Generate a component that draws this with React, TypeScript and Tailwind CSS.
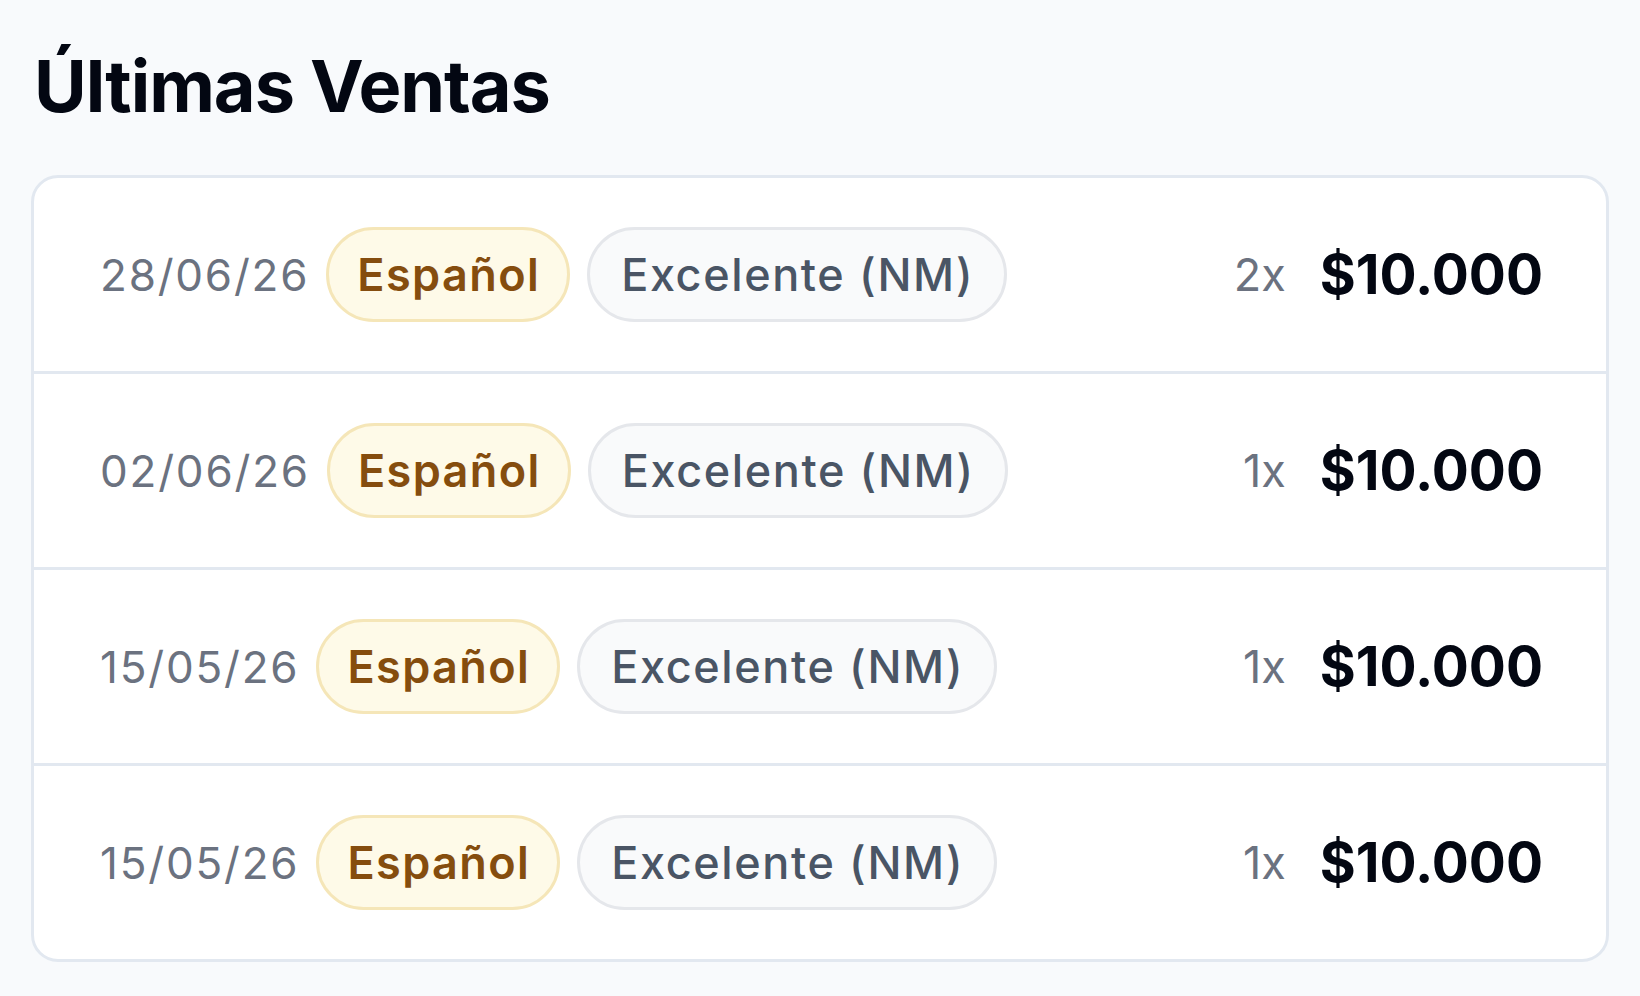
import React from "react";

const rows = [
  { date: "28/06/26", qty: "2x", price: "$10.000" },
  { date: "02/06/26", qty: "1x", price: "$10.000" },
  { date: "15/05/26", qty: "1x", price: "$10.000" },
  { date: "15/05/26", qty: "1x", price: "$10.000" },
];

export default function App() {
  return (
    <div
      className="min-h-screen w-full bg-[#f8fafc] px-[31px] pt-[38px]"
      style={{ fontFamily: "Inter, 'Noto Sans', sans-serif" }}
    >
      <h1 className="ml-[3px] text-[72px] font-bold leading-[96px] text-[#030712] tracking-[-1px]">
        Últimas Ventas
      </h1>
      <div className="mt-[41px] overflow-hidden rounded-[27px] border-[3px] border-[#e2e8f0] bg-white">
        <div className="flex flex-col divide-y-[3px] divide-[#e2e8f0]">
          {rows.map((r, i) => (
            <div key={i} className="box-content flex h-[193px] items-center pl-[66px] pr-[63px]">
              <span className="mr-[17px] text-[44px] tracking-[1.8px] text-[#6b7280]">{r.date}</span>
              <div className="flex items-center gap-[17px]">
                <span className="flex h-[95px] items-center rounded-full border-[3px] border-[#f5e6b8] bg-[#fefae8] pl-[28px] pr-[27px] text-[45px] font-semibold tracking-[1.4px] text-[#854d0e]">
                  Español
                </span>
                <span className="flex h-[95px] items-center rounded-full border-[3px] border-[#e5e7eb] bg-[#f9fafb] pl-[31px] pr-[30px] text-[45px] font-medium tracking-[1.6px] text-[#4a5565]">
                  Excelente (NM)
                </span>
              </div>
              <div className="ml-auto flex items-center">
                <span className="text-[45px] text-[#6b7280]">{r.qty}</span>
                <span className="ml-[34px] text-[55px] font-bold text-[#030712]">{r.price}</span>
              </div>
            </div>
          ))}
        </div>
      </div>
    </div>
  );
}
